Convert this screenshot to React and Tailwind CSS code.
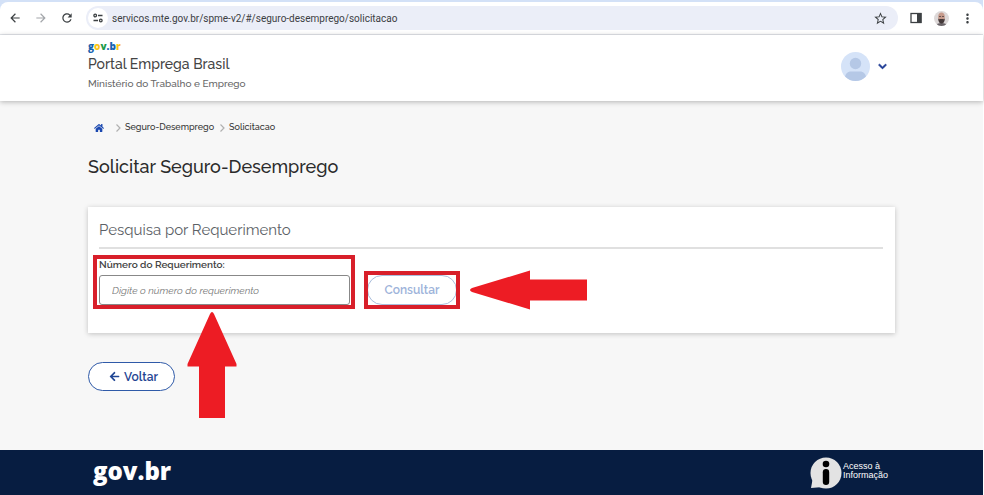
import { useState } from 'react';
import { FaArrowLeft, FaChevronDown, FaHome } from 'react-icons/fa';
import { MdArrowBack, MdArrowForward, MdMoreVert, MdRefresh, MdStarBorder } from 'react-icons/md';

const GOVBR_LETTERS = [
  { char: 'g', color: 'text-[#1663b0]' },
  { char: 'o', color: 'text-[#fbc515]' },
  { char: 'v', color: 'text-[#1d9b4a]' },
  { char: '.', color: 'text-[#1663b0]' },
  { char: 'b', color: 'text-[#1663b0]' },
  { char: 'r', color: 'text-[#fbc515]' },
];

function BrowserBar() {
  return (
    <div className="border-b border-[#e4e7ec] bg-[#d3e1f7] pt-0.5">
      <div className="flex h-8 items-center rounded-t-lg bg-white pr-2 pl-1 text-[#3c4043]">
        <button type="button" aria-label="Voltar página" className="p-1"><MdArrowBack size={14} /></button>
        <button type="button" aria-label="Avançar página" className="ml-1 p-1 text-[#a3a6aa]"><MdArrowForward size={14} /></button>
        <button type="button" aria-label="Recarregar" className="ml-1 p-1"><MdRefresh size={14} /></button>
        <div className="ml-2 flex h-6 flex-1 items-center rounded-full bg-[#ebeef8] pr-2 pl-0.5">
          <span className="flex size-5 items-center justify-center rounded-full bg-white">
            <svg width="10" height="10" viewBox="0 0 10 10" fill="none" stroke="currentColor" strokeWidth="1.3">
              <circle cx="2.2" cy="2.5" r="1.3" />
              <path d="M5 2.5h4.5M0.5 7.5H5" />
              <circle cx="7.8" cy="7.5" r="1.3" />
            </svg>
          </span>
          <input
            type="text"
            aria-label="Endereço"
            defaultValue="servicos.mte.gov.br/spme-v2/#/seguro-desemprego/solicitacao"
            className="ml-1 min-w-0 flex-1 bg-transparent font-['Roboto',sans-serif] text-[10px] outline-none"
          />
          <button type="button" aria-label="Favoritar" className="mr-0.5"><MdStarBorder size={15} /></button>
        </div>
        <button type="button" aria-label="Painel lateral" className="ml-3">
          <svg width="12" height="12" viewBox="0 0 12 12" fill="none">
            <rect x="1" y="1.5" width="10" height="9" stroke="currentColor" strokeWidth="1.3" />
            <path d="M7 1h4.5v10H7z" fill="currentColor" />
          </svg>
        </button>
        <button type="button" aria-label="Perfil" className="ml-3">
          <svg width="15" height="15" viewBox="0 0 15 15">
            <clipPath id="perfil"><circle cx="7.5" cy="7.5" r="7.5" /></clipPath>
            <g clipPath="url(#perfil)">
              <path fill="#ddd8d8" d="M0 0h15v15H0z" />
              <path fill="#6a6468" d="M2 15c0-2 2-3 5.500-3s5.500 1 5.500 3z" />
              <ellipse cx="7.500" cy="6" rx="3.300" ry="4.500" fill="#c69a8b" />
              <path fill="#453a3a" d="M4.200 7.500c1 1 1.500.5 3.300.5s2.300.5 3.300-.5c0 3-1.200 5-3.300 5s-3.300-2-3.300-5z" />
              <path stroke="#453a3a" strokeWidth=".7" d="M5 5.500h2M8 5.500h2" />
            </g>
          </svg>
        </button>
        <button type="button" aria-label="Menu" className="ml-[11px]"><MdMoreVert size={15} /></button>
      </div>
    </div>
  );
}

function Header() {
  return (
    <header className="flex h-[66px] items-center justify-between bg-white px-22 pb-1 shadow-[0_1px_5px_rgba(0,0,0,0.28)]">
      <div>
        <div className="font-['Open_Sans',sans-serif] text-[10px] leading-3 font-extrabold">
          {GOVBR_LETTERS.map(({ char, color }) => (
            <span key={char} className={color}>{char}</span>
          ))}
        </div>
        <p className="mt-0.5 text-[14px] leading-5 font-medium text-[#444]">Portal Emprega Brasil</p>
        <p className="mt-0.5 text-[10px] leading-4 font-medium text-[#666]">Ministério do Trabalho e Emprego</p>
      </div>
      <button type="button" aria-label="Conta do usuário" className="flex items-center gap-2 pr-2 text-[#1d3a94]">
        <svg width="29" height="29" viewBox="0 0 29 29">
          <clipPath id="avatar"><circle cx="14.5" cy="14.5" r="14.5" /></clipPath>
          <g clipPath="url(#avatar)">
            <path fill="#d5e3f8" d="M0 0h29v29H0z" />
            <circle cx="14.5" cy="11.500" r="5.700" fill="#b5c8e6" />
            <path fill="#b5c8e6" d="M4 29v-3c0-4 2.500-6.500 6-6.500h9c3.500 0 6 2.500 6 6.500v3z" />
          </g>
        </svg>
        <FaChevronDown size={9} stroke="currentColor" strokeWidth={40} />
      </button>
    </header>
  );
}

function Separator() {
  return (
    <svg width="5" height="8" viewBox="0 0 5 8" fill="none" stroke="#b0b0b0" strokeWidth="1.2" className="mr-1">
      <path d="M.5.5 4 4 .5 7.500" />
    </svg>
  );
}

function Breadcrumb() {
  return (
    <nav aria-label="Trilha" className="flex h-4 items-center pl-1.5 text-[9px] font-medium text-[#333]">
      <a href="#/" aria-label="Início" className="mr-3 text-[#1a48b0]"><FaHome size={10} /></a>
      <Separator />
      <a href="#/seguro-desemprego" className="mr-1.5">Seguro-Desemprego</a>
      <Separator />
      <span>Solicitacao</span>
    </nav>
  );
}

function SearchCard() {
  const [numero, setNumero] = useState('');

  return (
    <section className="mt-7 h-[126px] bg-white pr-3 pl-[11px] shadow-[0_1px_5px_rgba(0,0,0,0.22)]">
      <h2 className="border-b-2 border-[#e0e0e0] pt-[13px] pb-[7px] text-[15px] leading-5 text-[#5c6166]">
        Pesquisa por Requerimento
      </h2>
      <form className="mt-2 flex items-end gap-[17px]" onSubmit={(e) => e.preventDefault()}>
        <div className="relative w-[251px]">
          <label htmlFor="numero" className="block text-[10px] leading-4 font-semibold text-[#444]">Número do Requerimento:</label>
          <input
            id="numero"
            type="text"
            value={numero}
            onChange={(e) => setNumero(e.target.value)}
            placeholder="Digite o número do requerimento"
            className="mt-0.5 block h-[30px] w-full rounded-[3px] border border-[#888] px-3 text-[10px] placeholder:text-[#777] placeholder:italic"
          />
          <span className="pointer-events-none absolute -top-0.5 -right-[5px] -bottom-1 -left-1.5 border-4 border-[#d81f2a]" />
          <svg width="50" height="107" viewBox="0 0 50 107" className="pointer-events-none absolute top-full left-22 mt-[7px]" fill="#ed1c24">
            <path d="M25 0q1 0 2 2l22.500 50v2.500H38V106H12V54.500H.5V52L23 2q1-2 2-2z" />
          </svg>
        </div>
        <div className="relative">
          <button type="submit" className="block h-[30px] w-[90px] rounded-full border border-[#a9bddb] text-[12px] font-semibold text-[#9db3da]">
            Consultar
          </button>
          <span className="pointer-events-none absolute -inset-x-[3px] -inset-y-1 border-4 border-[#d81f2a]" />
          <svg width="118" height="40" viewBox="0 0 118 40" className="pointer-events-none absolute -top-[5px] left-full ml-[13px]" fill="#ed1c24">
            <path d="M0 20q0-1 2-2L60 .5V9.500h57v21H60v9L2 22q-2-1-2-2z" />
          </svg>
        </div>
      </form>
    </section>
  );
}

function Footer() {
  return (
    <footer className="mt-auto flex h-[45px] items-center justify-between bg-[#071d41] px-[93px] text-white">
      <span className="pb-1 font-['Open_Sans',sans-serif] text-[24px] leading-8 font-extrabold">gov.br</span>
      <a href="#/acesso" className="flex items-center gap-px">
        <svg width="32" height="32" viewBox="0 0 32 32">
          <circle cx="16" cy="16" r="15.500" fill="#e3e3e3" />
          <path fill="#e3e3e3" d="M3 20 1 31l12-1z" />
          <circle cx="16" cy="7" r="3.300" />
          <rect x="12.800" y="12" width="6.400" height="16" rx="3.200" />
        </svg>
        <span className="pr-0.5 pb-1 font-['Liberation_Sans',sans-serif] text-[9px] leading-[9px]">Acesso à<br />Informação</span>
      </a>
    </footer>
  );
}

export default function App() {
  return (
    <div className="flex min-h-screen flex-col border-r border-white bg-[#f7f7f7] font-['Raleway','Lato',sans-serif]">
      <BrowserBar />
      <Header />
      <main className="px-22 pt-[19px] pb-8">
        <Breadcrumb />
        <h1 className="mt-[19px] text-[18px] leading-6 font-medium text-[#2b2b2b]">Solicitar Seguro-Desemprego</h1>
        <SearchCard />
        <button type="button" className="mt-[29px] flex h-[29px] w-[87px] items-center justify-center gap-1 rounded-full border border-[#2f5aa8] bg-white pl-1 text-[12px] font-semibold text-[#1f4593]">
          <FaArrowLeft size={11} />
          Voltar
        </button>
      </main>
      <Footer />
    </div>
  );
}
